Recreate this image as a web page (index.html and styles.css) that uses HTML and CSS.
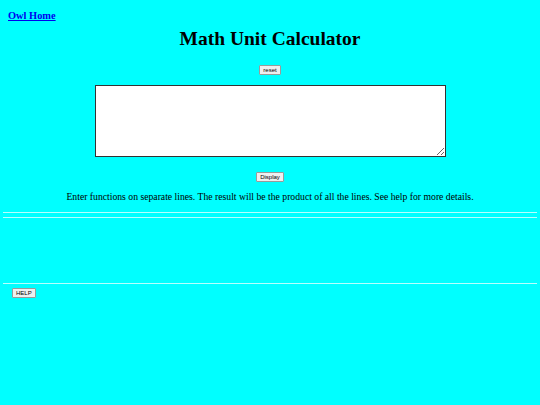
FILE: index.html
```html
<!DOCTYPE html>
<html>
<head>
<meta charset="utf-8">
<link rel="stylesheet" href="styles.css">
</head>
<body>
<div class="top"><a class="home" href="#">Owl Home</a></div>
<h1 class="title">Math Unit Calculator</h1>
<div class="center reset-row"><button class="btn">reset</button></div>
<div class="center area-row"><textarea class="input"></textarea></div>
<div class="center"><button class="btn">Display</button></div>
<p class="info">Enter functions on separate lines. The result will be the product of all the lines. See help for more details.</p>
<div class="rule rule-a"></div>
<div class="rule rule-b"></div>
<div class="result"></div>
<div class="rule rule-c"></div>
<div class="help-row"><button class="btn">HELP</button></div>
</body>
</html>
```
FILE: styles.css
```css
html, body {
  margin: 0;
  padding: 0;
  background: #00ffff;
}
body {
  font-family: "Liberation Serif", serif;
  color: #000;
  width: 540px;
  height: 405px;
  overflow: hidden;
}
.top {
  padding: 5px 0 0 8px;
  height: 15px;
}
.home {
  font-size: 10.4px;
  font-weight: bold;
  color: #0000ee;
}
.title {
  margin: 7px 0 0 0;
  font-size: 19.5px;
  text-align: center;
  line-height: 24px;
}
.center {
  display: flex;
  justify-content: center;
}
.btn {
  font-family: "Liberation Sans", Arial, sans-serif;
  font-size: 6px;
  padding: 1px 3px;
  margin: 0;
  background: #efefef;
  border: 1px solid #9a9a9a;
  border-radius: 1px;
  line-height: 6px;
  color: #000;
}
.reset-row {
  margin-top: 14px;
}
.area-row {
  margin-top: 10px;
  margin-bottom: 15px;
}
.input {
  width: 351px;
  height: 72px;
  box-sizing: border-box;
  border: 1px solid #333;
  background: #fff;
  margin: 0;
  padding: 2px;
  resize: both;
}
.info {
  margin: 8px 0 0 0;
  font-size: 9.7px;
  text-align: center;
  line-height: 14px;
}
.rule {
  height: 0;
  border-top: 1px solid #b8ffff;
  margin: 0 3px;
}
.rule-a {
  margin-top: 8px;
}
.rule-b {
  margin-top: 4px;
}
.result {
  height: 65px;
}
.help-row {
  display: flex;
  padding: 4px 0 0 12px;
}
```
